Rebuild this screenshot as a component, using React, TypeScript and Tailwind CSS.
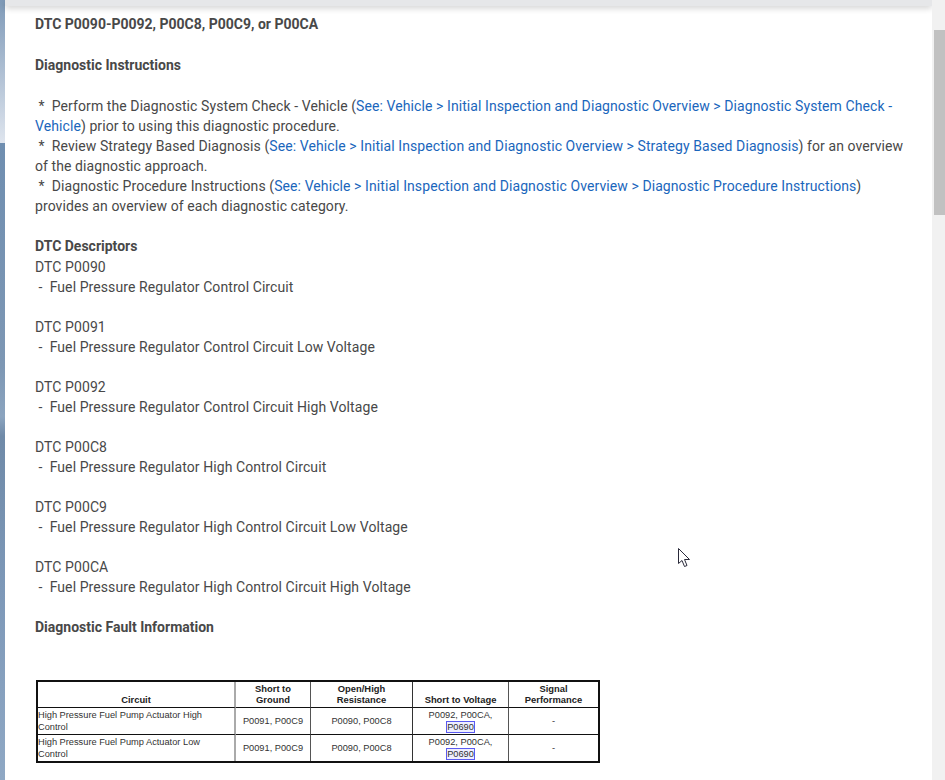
const DESCRIPTORS = [
  { code: "DTC P0090", text: "Fuel Pressure Regulator Control Circuit" },
  { code: "DTC P0091", text: "Fuel Pressure Regulator Control Circuit Low Voltage" },
  { code: "DTC P0092", text: "Fuel Pressure Regulator Control Circuit High Voltage" },
  { code: "DTC P00C8", text: "Fuel Pressure Regulator High Control Circuit" },
  { code: "DTC P00C9", text: "Fuel Pressure Regulator High Control Circuit Low Voltage" },
  { code: "DTC P00CA", text: "Fuel Pressure Regulator High Control Circuit High Voltage" },
];

const FAULT_ROWS = [
  "High Pressure Fuel Pump Actuator High Control",
  "High Pressure Fuel Pump Actuator Low Control",
];

function Link({ children }: { children: React.ReactNode }) {
  return <a className="text-[#1a66bc]">{children}</a>;
}

function FaultTable() {
  return (
    <table className="ml-[2px] w-[564px] table-fixed border-separate border-spacing-0 border-2 border-[#111] font-['Liberation_Sans',sans-serif] text-[9.25px] leading-[12px] tracking-normal text-[#333]">
      <colgroup>
        <col className="w-[198px]" />
        <col className="w-[75px]" />
        <col className="w-[102px]" />
        <col className="w-[96px]" />
        <col />
      </colgroup>
      <thead>
        <tr className="h-[26px] text-[9.4px] leading-[11px] font-bold text-[#222]">
          <th className="border-r-2 border-b border-r-[#aaa] border-b-[#111] px-[2px] pb-[2px] align-bottom">Circuit</th>
          <th className="border-r border-b border-r-[#555] border-b-[#111] px-[2px] pb-[2px] align-bottom">Short to<br />Ground</th>
          <th className="border-r border-b border-r-[#333] border-b-[#111] px-[2px] pb-[2px] align-bottom">Open/High<br />Resistance</th>
          <th className="border-r border-b border-r-[#555] border-b-[#111] px-[2px] pb-[2px] align-bottom">Short to Voltage</th>
          <th className="border-b border-b-[#111] px-[2px] pb-[2px] align-bottom">Signal<br />Performance</th>
        </tr>
      </thead>
      <tbody>
        {FAULT_ROWS.map((row, i) => {
          const rowLine = i === 0 ? "border-b border-b-[#111]" : "";
          return (
            <tr key={row} className={i === 0 ? "h-[27px]" : "h-[26px]"}>
              <td className={`border-r-2 border-r-[#aaa] pr-[8px] align-middle ${rowLine}`}>{row}</td>
              <td className={`border-r border-r-[#555] text-center align-middle ${rowLine}`}>P0091, P00C9</td>
              <td className={`border-r border-r-[#333] text-center align-middle ${rowLine}`}>P0090, P00C8</td>
              <td className={`border-r border-r-[#555] text-center align-middle ${rowLine}`}>
                P0092, P00CA,
                <br />
                <span className="border border-[#5a5af0] bg-[#eef]">P0690</span>
              </td>
              <td className={`text-center align-middle ${rowLine}`}>-</td>
            </tr>
          );
        })}
      </tbody>
    </table>
  );
}

export default function App() {
  return (
    <div className="relative flex h-[780px] w-[945px] overflow-hidden bg-white font-['Roboto',sans-serif] text-[14px] leading-[20px] tracking-[0.085px] text-[#484848]">
      <div className="flex w-[5px] flex-col">
        <div className="h-[143px] bg-gradient-to-b from-[#7f9ab8] to-[#dfe5ee]" />
        <div className="flex-1 bg-[linear-gradient(to_bottom,#6f8eb0,#7d97b4_35%,#8ba4bf_43%,#6f8aa8_46%,#7d98b8_70%,#8fa8c4)]" />
      </div>

      <div className="flex w-[927px] flex-col">
        <div className="h-[6px] bg-[#e6e7e9] shadow-[0_2px_6px_rgba(0,0,0,0.2)]" />
        <div className="flex-1 pt-[8px] pl-[30px] pr-[22px]">
          <p className="font-bold tracking-normal">DTC P0090-P0092, P00C8, P00C9, or P00CA</p>
          <p className="mt-[21px] font-bold tracking-normal">Diagnostic Instructions</p>
          <div className="mt-[21px]">
            <p>
              &nbsp;*&nbsp; Perform the Diagnostic System Check - Vehicle (
              <Link>See: Vehicle &gt; Initial Inspection and Diagnostic Overview &gt; Diagnostic System Check - Vehicle</Link>
              ) prior to using this diagnostic procedure.
            </p>
            <p>
              &nbsp;*&nbsp; Review Strategy Based Diagnosis (
              <Link>See: Vehicle &gt; Initial Inspection and Diagnostic Overview &gt; Strategy Based Diagnosis</Link>
              ) for an overview of the diagnostic approach.
            </p>
            <p>
              &nbsp;*&nbsp; Diagnostic Procedure Instructions (
              <Link>See: Vehicle &gt; Initial Inspection and Diagnostic Overview &gt; Diagnostic Procedure Instructions</Link>
              ) provides an overview of each diagnostic category.
            </p>
          </div>
          <p className="mt-[20px] font-bold tracking-normal">DTC Descriptors</p>
          <div className="mt-[1px] flex flex-col gap-[20px]">
            {DESCRIPTORS.map((d) => (
              <div key={d.code}>
                <p>{d.code}</p>
                <p>&nbsp;-&nbsp; {d.text}</p>
              </div>
            ))}
          </div>
          <p className="mt-[20px] mb-[43px] font-bold tracking-normal">Diagnostic Fault Information</p>
          <div className="-ml-px w-[566px]">
            <FaultTable />
          </div>
        </div>
      </div>

      <div className="flex w-[13px] flex-col bg-[#f1f1f1] pt-[30px] pl-[2px]">
        <div className="h-[185px] bg-[#c1c1c1]" />
      </div>

      <svg className="absolute left-[677px] top-[547px]" width="15" height="22" viewBox="0 0 15 22">
        <path d="M1.5 1.5V16.5L5 13.5L7.5 19.5L10 18.5L7.5 12.5H12.5Z" fill="#fff" stroke="#2a2a3a" strokeWidth="1" />
      </svg>
    </div>
  );
}
